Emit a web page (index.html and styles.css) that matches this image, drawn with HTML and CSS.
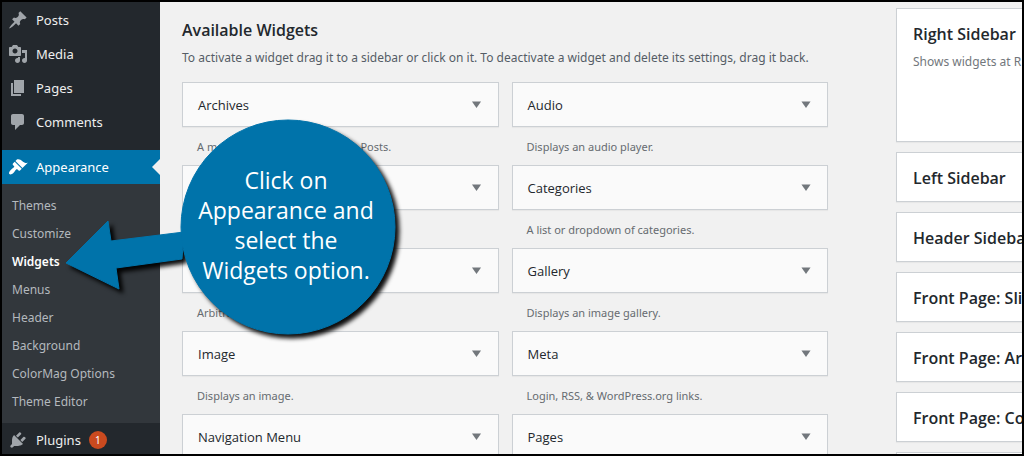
FILE: index.html
```html
<!DOCTYPE html>
<html lang="en">
<head>
<meta charset="utf-8">
<title>Widgets</title>
<link rel="stylesheet" href="styles.css">
</head>
<body>
<div class="frame">
  <nav class="menu" aria-label="Main menu">
    <a class="item" href="#"><svg class="icon" viewBox="0 0 20 20"><path d="M10.44 3.02l1.82-1.82 6.36 6.35-1.83 1.82c-1.05-.68-2.48-.57-3.41.36l-.75.75c-.92.93-1.04 2.35-.35 3.41l-1.83 1.82-2.41-2.41-2.8 2.79c-.42.42-3.38 2.71-3.8 2.29s1.86-3.39 2.28-3.81l2.79-2.79L4.1 9.36l1.83-1.82c1.05.69 2.48.57 3.4-.36l.75-.75c.93-.92 1.05-2.35.36-3.41z"/></svg>Posts</a>
    <a class="item" href="#"><svg class="icon" viewBox="0 0 20 20"><path d="M13 11V4c0-.55-.45-1-1-1h-1.67L9 1H5L3.67 3H2c-.55 0-1 .45-1 1v7c0 .55.45 1 1 1h10c.55 0 1-.45 1-1zM7 4.5c1.38 0 2.5 1.12 2.5 2.5S8.38 9.5 7 9.5 4.5 8.38 4.5 7 5.62 4.5 7 4.5zM14 6h5v10.5c0 1.38-1.12 2.5-2.5 2.5S14 17.88 14 16.5s1.12-2.5 2.5-2.5c.17 0 .34.02.5.05V9h-3V6zm-4 8.05V13h2v3.5c0 1.38-1.12 2.5-2.5 2.5S7 17.88 7 16.5 8.12 14 9.5 14c.17 0 .34.02.5.05z"/></svg>Media</a>
    <a class="item" href="#"><svg class="icon" viewBox="0 0 20 20"><path d="M6 15V2h10v13H6zm-1 1h8v2H3V5h2v11z"/></svg>Pages</a>
    <a class="item" href="#"><svg class="icon" viewBox="0 0 20 20"><path d="M5 2h9c1.1 0 2 .9 2 2v7c0 1.1-.9 2-2 2h-2l-5 5v-5H5c-1.1 0-2-.9-2-2V4c0-1.1.9-2 2-2z"/></svg>Comments</a>
    <a class="item current" href="#"><svg class="icon" viewBox="0 0 20 20"><path d="M14.48 11.06L7.41 3.99l1.5-1.5c.5-.56 2.3-.47 3.51.32 1.21.8 1.43 1.28 2.91 2.1 1.18.64 2.45 1.26 4.45.85zm-.71.71L6.7 4.7 4.93 6.47c-.39.39-.39 1.02 0 1.41l1.06 1.06c.39.39.39 1.03 0 1.42-.6.6-1.43 1.11-2.21 1.69-.35.26-.7.53-1.01.84C1.43 14.23.4 16.08 1.4 17.07c.99 1 2.84-.03 4.18-1.36.31-.31.58-.66.85-1.02.57-.78 1.08-1.61 1.69-2.21.39-.39 1.02-.39 1.41 0l1.06 1.06c.39.39 1.02.39 1.41 0z"/></svg>Appearance</a>
    <div class="submenu">
      <a href="#">Themes</a>
      <a href="#">Customize</a>
      <a class="selected" href="#">Widgets</a>
      <a href="#">Menus</a>
      <a href="#">Header</a>
      <a href="#">Background</a>
      <a href="#">ColorMag Options</a>
      <a href="#">Theme Editor</a>
    </div>
    <a class="item" href="#"><svg class="icon" viewBox="0 0 20 20"><path d="M13.11 4.36L9.87 7.6 8 5.73l3.24-3.24c.35-.34 1.05-.2 1.56.32.52.51.66 1.21.31 1.55zm-8 1.77l.91-1.12 9.01 9.01-1.19.84c-.71.71-2.63 1.16-3.82 1.16H6.14L4.9 17.26c-.59.59-1.54.59-2.12 0-.59-.58-.59-1.53 0-2.12l1.24-1.24v-3.88c0-1.13.4-3.19 1.09-3.89zm7.26 3.97l3.24-3.24c.34-.35 1.04-.21 1.55.31.52.51.66 1.21.31 1.55l-3.24 3.25z"/></svg>Plugins<span class="count">1</span></a>
  </nav>
  <main class="content">
    <section class="available">
      <h2>Available Widgets</h2>
      <p class="intro">To activate a widget drag it to a sidebar or click on it. To deactivate a widget and delete its settings, drag it back.</p>
      <div class="grid">
        <article><div class="card"><h3>Archives</h3><button class="toggle" aria-label="Add Archives"></button></div><p>A monthly archive of your site’s Posts.</p></article>
        <article><div class="card"><h3>Audio</h3><button class="toggle" aria-label="Add Audio"></button></div><p>Displays an audio player.</p></article>
        <article><div class="card"><h3></h3><button class="toggle" aria-label="Add widget"></button></div></article>
        <article><div class="card"><h3>Categories</h3><button class="toggle" aria-label="Add Categories"></button></div><p>A list or dropdown of categories.</p></article>
        <article><div class="card"><h3></h3><button class="toggle" aria-label="Add widget"></button></div><p>Arbitrary HTML code.</p></article>
        <article><div class="card"><h3>Gallery</h3><button class="toggle" aria-label="Add Gallery"></button></div><p>Displays an image gallery.</p></article>
        <article><div class="card"><h3>Image</h3><button class="toggle" aria-label="Add Image"></button></div><p>Displays an image.</p></article>
        <article><div class="card"><h3>Meta</h3><button class="toggle" aria-label="Add Meta"></button></div><p>Login, RSS, &amp; WordPress.org links.</p></article>
        <article><div class="card"><h3>Navigation Menu</h3><button class="toggle" aria-label="Add Navigation Menu"></button></div></article>
        <article><div class="card"><h3>Pages</h3><button class="toggle" aria-label="Add Pages"></button></div></article>
      </div>
    </section>
    <section class="areas">
      <div class="area open"><h2>Right Sidebar</h2><p>Shows widgets at R</p></div>
      <div class="area"><h2>Left Sidebar</h2></div>
      <div class="area"><h2>Header Sideba</h2></div>
      <div class="area"><h2>Front Page: Sli</h2></div>
      <div class="area"><h2>Front Page: Ar</h2></div>
      <div class="area"><h2>Front Page: Co</h2></div>
      <div class="area"></div>
    </section>
  </main>
  <div class="callout">
    <svg class="bubble" viewBox="0 0 350 240" aria-hidden="true">
      <path d="M6 153 L48 111 L51 131 L124 122 L122 149 L56 158 L59 179 Z"/>
      <circle cx="228" cy="117" r="107"/>
    </svg>
    <p>Click on<br>Appearance and<br>select the<br>Widgets option.</p>
  </div>
</div>
</body>
</html>
```
FILE: styles.css
```css
* { box-sizing: border-box; }
body, h2, h3, p { margin: 0; }
body {
  font-family: "Noto Sans", "Open Sans", sans-serif;
  font-size: 12px;
  color: #555d66;
}
a { color: inherit; text-decoration: none; }

.frame {
  position: relative;
  display: flex;
  height: 100vh;
  overflow: hidden;
  border: 2px solid #000;
  background: #f1f1f1;
}

.menu {
  flex: 0 0 158px;
  padding-top: 1px;
  background: #23282d;
}
.item {
  display: flex;
  align-items: center;
  gap: 8px;
  height: 34px;
  padding-left: 6px;
  font-size: 13px;
  color: #eee;
}
.icon { width: 20px; height: 20px; fill: #a0a5aa; }
.current {
  position: relative;
  margin-top: 11px;
  background: #0073aa;
  color: #fff;
}
.current .icon { fill: #fff; }
.current::after {
  content: "";
  position: absolute;
  top: 9px;
  right: 0;
  border: 8px solid transparent;
  border-right-color: #f1f1f1;
  border-left: 0;
}
.submenu {
  padding: 8px 0 7px;
  background: #32373c;
  color: #b4b9be;
}
.submenu a {
  display: block;
  padding-left: 10px;
  line-height: 28px;
}
.submenu .selected { color: #fff; font-weight: 600; }
.count {
  width: 18px;
  border-radius: 9px;
  background: #ca4a1f;
  color: #fff;
  font-size: 10px;
  line-height: 18px;
  text-align: center;
}

.content {
  flex: 1;
  min-width: 0;
  display: grid;
  grid-template-columns: minmax(0, 646fr) minmax(0, 126fr);
  gap: 68px;
  padding-left: 22px;
}
h2 {
  font-family: "Open Sans", "Noto Sans", sans-serif;
  font-size: 16px;
  font-weight: 600;
  line-height: 24px;
  color: #23282d;
  white-space: nowrap;
}
.available { padding-top: 16px; }
.intro { margin-top: 4px; line-height: 24px; white-space: nowrap; }
.grid {
  display: grid;
  grid-template-columns: 1fr 1fr;
  grid-auto-rows: 83px;
  column-gap: 13px;
  margin-top: 12px;
}
.card {
  display: flex;
  align-items: center;
  justify-content: space-between;
  height: 45px;
  padding: 0 15px;
  border: 1px solid #ccd0d4;
  background: #fafafa;
  box-shadow: 0 1px 1px rgba(0, 0, 0, .04);
}
h3 {
  font-family: "Open Sans", "Noto Sans", sans-serif;
  font-size: 13px;
  font-weight: 500;
  color: #23282d;
}
.toggle {
  width: 12px;
  height: 12px;
  padding: 0;
  border: 0;
  background: #72777c;
  clip-path: polygon(12% 25%, 88% 25%, 50% 80%);
}
.grid p {
  padding: 10px 15px 0;
  font-size: 11px;
  line-height: 20px;
  color: #666b70;
}

.areas {
  display: flex;
  flex-direction: column;
  gap: 10px;
  padding-top: 6px;
}
.area {
  flex: none;
  height: 50px;
  padding: 13px 0 13px 16px;
  overflow: hidden;
  border: 1px solid #ccd0d4;
  border-right: 0;
  background: #fff;
  box-shadow: 0 1px 1px rgba(0, 0, 0, .04);
}
.area.open { height: 134px; }
.area p { margin-top: 4px; line-height: 24px; color: #72777c; white-space: nowrap; }

.callout {
  position: absolute;
  top: 108px;
  left: 58px;
  width: 350px;
  height: 240px;
}
.bubble {
  display: block;
  width: 350px;
  height: 240px;
  fill: #0073aa;
  stroke: #0073aa;
  stroke-linejoin: round;
  stroke-width: 1;
  filter: drop-shadow(4px 4px 2px rgba(0, 0, 0, .95));
}
.callout p {
  position: absolute;
  top: 55px;
  left: 118px;
  width: 216px;
  font-family: "Open Sans", "Noto Sans", sans-serif;
  font-size: 23px;
  line-height: 30px;
  text-align: center;
  color: #fff;
}
```
